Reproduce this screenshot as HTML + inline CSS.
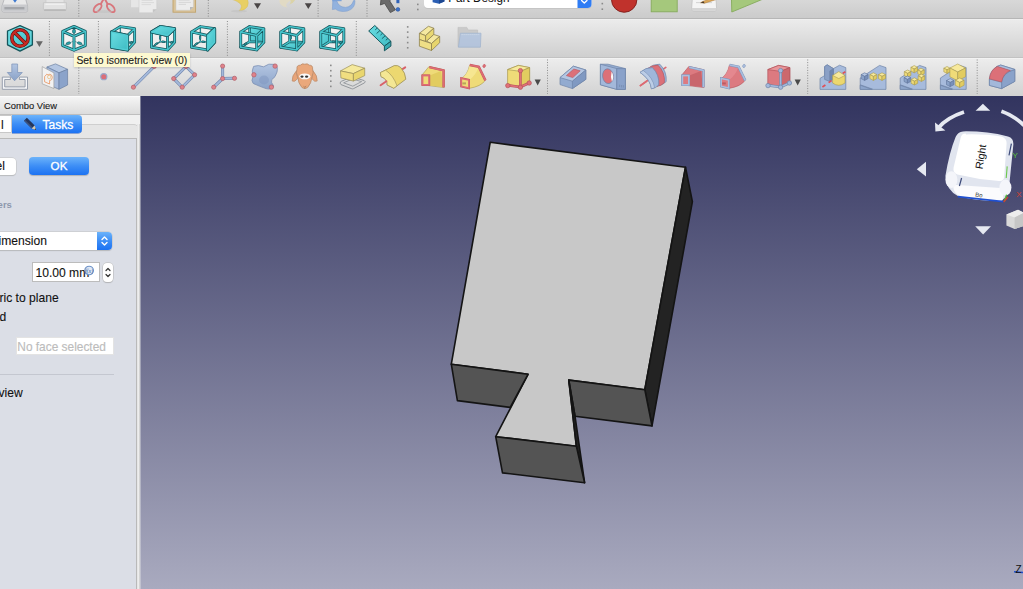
<!DOCTYPE html>
<html>
<head>
<meta charset="utf-8">
<title>FreeCAD</title>
<style>
html,body{margin:0;padding:0;}
body{width:1023px;height:589px;overflow:hidden;position:relative;background:#e4e4e4;font-family:"Liberation Sans",sans-serif;font-size:13px;color:#000;}
.abs{position:absolute;}
#row1{left:0;top:0;width:1023px;height:18px;background:linear-gradient(#d8d8d8,#cbcbcb);border-bottom:1px solid #b6b6b6;}
#row2{left:0;top:19px;width:1023px;height:38px;background:linear-gradient(#f2f2f2,#ebebeb 3%,#cfcfcf);border-bottom:1px solid #c2c2c2;}
#row3{left:0;top:58px;width:1023px;height:38px;background:linear-gradient(#f6f6f6,#ececec 4%,#d2d2d2);}
#view{left:141px;top:96px;width:882px;height:493px;background:linear-gradient(#32345f,#a9aabf);}
#panel{left:0;top:96px;width:140px;height:493px;background:#ececec;}
#split{left:137px;top:124px;width:3px;height:465px;background:linear-gradient(90deg,#dcdcdc,#f4f4f4 40%,#c8c8c8);}
.tx{font-size:12.1px;line-height:18px;white-space:nowrap;color:#111;-webkit-text-stroke:0.1px #111;}
.sep{width:0;border-left:1px dotted #8a8a8a;}
</style>
</head>
<body>
<div id="row1" class="abs"></div>
<div id="row2" class="abs"></div>
<div id="row3" class="abs"></div>
<div id="panel" class="abs"></div>
<div id="view" class="abs"></div>
<div class="abs" style="left:140px;top:96px;width:1px;height:493px;background:linear-gradient(#7e8098,#c2c3d0);"></div>
<svg id="icons" class="abs" style="left:0;top:0" width="1023" height="97" viewBox="0 0 1023 97">
<g clip-path="url(#r1clip)">
<defs><clipPath id="r1clip"><rect x="0" y="0" width="1023" height="18"/></clipPath></defs>
<path d="M4.6 -2 L25.4 -2 L27.6 6 L27.6 10.6 Q27.6 12 26 12 L3.6 12 Q2 12 2 10.6 L2 6 Z" fill="#e9e9e9" stroke="#aeb0b4" stroke-width="0.8"/>
<path d="M2.4 4.6 L27.2 4.6 L27.2 10.6 Q27.2 11.6 26 11.6 L3.6 11.6 Q2.4 11.6 2.4 10.6 Z" fill="#c9cacd"/>
<rect x="4.4" y="7" width="20" height="2.4" fill="#a4a6aa"/>
<path d="M12.4 -1 L17.6 -1 L15 2.8 Z" fill="#3c78d0"/>
<path d="M46 -2 L64 -2 L64 3 L46 3 Z" fill="#e4e4e4" stroke="#c6c6c6" stroke-width="0.6"/>
<path d="M43.4 2.6 L66.4 2.6 L66.4 9.4 Q66.4 10.6 65 10.6 L44.8 10.6 Q43.4 10.6 43.4 9.4 Z" fill="#e2e2e2" stroke="#c2c2c2" stroke-width="0.7"/>
<rect x="45.4" y="3.6" width="19" height="1.2" fill="#f2f2f2"/><rect x="43.8" y="9.2" width="22.2" height="1.6" rx="0.8" fill="#b4b4b4"/>
<line x1="78.8" y1="0" x2="78.8" y2="17" stroke="#8c8c8c" stroke-width="1" stroke-dasharray="1 1.6"/>
<ellipse cx="97.6" cy="8" rx="2.7" ry="5" fill="none" stroke="#d8767c" stroke-width="1.9" transform="rotate(42 97.6 8)"/>
<ellipse cx="110.8" cy="8" rx="2.7" ry="5" fill="none" stroke="#d8767c" stroke-width="1.9" transform="rotate(-42 110.8 8)"/>
<path d="M100.8 4 L103.6 -1 M107.6 4 L104.8 -1" stroke="#d8767c" stroke-width="1.9"/>
<ellipse cx="104.2" cy="11.6" rx="8" ry="1.4" fill="#bdbdbd" opacity="0.5"/>
<rect x="130.8" y="-2" width="9.4" height="9.6" fill="#e6e6e6" stroke="#cfcfcf" stroke-width="0.5"/>
<path d="M139 -2 L156.8 -2 L156.8 9.2 L152.8 12.8 L139 12.8 Z" fill="#ebebeb" stroke="#cdcdcd" stroke-width="0.6"/>
<path d="M156.8 9.2 L152.8 12.8 L152.8 9.2 Z" fill="#c4c4c4"/>
<path d="M141.6 0.4 L152.6 0.4 M141.6 2.6 L154 2.6 M141.6 4.6 L151 4.6" stroke="#d2d2d2" stroke-width="0.7"/>
<rect x="173" y="-3" width="22.6" height="15.2" fill="#d9c39a" stroke="#c0a36c" stroke-width="0.9"/>
<path d="M176 -3 L193.4 -3 L193.4 7 L190 10.2 L176 10.2 Z" fill="#ececec" stroke="#c8c8c8" stroke-width="0.5"/>
<path d="M193.4 7 L190 10.2 L190 7 Z" fill="#b8b8b8"/>
<path d="M178.6 0.2 L189.6 0.2 M178.6 2.4 L191 2.4 M178.6 4.4 L186 4.4" stroke="#cfcfcf" stroke-width="0.7"/>
<line x1="208.3" y1="0" x2="208.3" y2="17" stroke="#8c8c8c" stroke-width="1" stroke-dasharray="1 1.6"/>
<path d="M230.9 -1 Q236.4 0.4 240 3.4 Q243.2 6.6 239.2 10.7 Q244.6 10.6 247.4 6.4 Q249 3 247.4 -1 Z" fill="#e8cf64" stroke="#d6bc54" stroke-width="0.5"/>
<ellipse cx="239" cy="11.2" rx="8" ry="1.2" fill="#bdbdbd" opacity="0.5"/>
<polygon points="254,3.2 261,3.2 257.5,9.0" fill="#4a4646"/>
<path d="M296 -1 Q288.6 0.6 286.8 3.4 Q285.2 6 287.6 7.4 Q282 7.2 280 3.6 Q278.6 0.4 280.6 -2 Z" fill="#e3dbbf" opacity="0.8"/>
<path d="M290 -1 Q291.6 2 289.4 4.6 Q293.6 3.6 295.6 -1 Z" fill="#dcd29c" opacity="0.8"/>
<polygon points="304.8,3.2 311.8,3.2 308.3,9.0" fill="#4a4646"/>
<line x1="318.1" y1="0" x2="318.1" y2="17" stroke="#8c8c8c" stroke-width="1" stroke-dasharray="1 1.6"/>
<path d="M332.4 9.6 L332.8 0.6 L336.6 0.6 Q338.6 7.2 345.4 7.4 Q351.6 7 353.6 0.6 L355 0.6 Q355.4 8.6 347.4 11 Q339.6 12.6 335.4 9 Z" fill="#92b2de" stroke="#7f9fce" stroke-width="0.6"/>
<path d="M332.2 -1 L341.6 -1 L341.6 1.2 L332.2 1.2 Z" fill="#7ca2d8"/>
<line x1="367" y1="0" x2="367" y2="17" stroke="#8c8c8c" stroke-width="1" stroke-dasharray="1 1.6"/>
<path d="M381 -1 L380.4 5 L384.6 3.4 L390.4 12.6 L395.4 9.8 L389.6 0.8 L391.6 -1 Z" fill="#6b6b6b" stroke="#4a4a4a" stroke-width="0.8" stroke-linejoin="round"/>
<rect x="396.4" y="-1" width="3" height="4.2" fill="#2f62b8"/>
<circle cx="397.9" cy="9.4" r="1.9" fill="#3d72c8" stroke="#234a94" stroke-width="0.5"/>
<rect x="417" y="3.6000000000000005" width="1.6" height="1.6" fill="#8a8a8a"/>
<rect x="417" y="8.7" width="1.6" height="1.6" fill="#8a8a8a"/>
<path d="M424 -2 L591.5 -2 L591.5 4.2 Q591.5 8.2 587.5 8.2 L428 8.2 Q424 8.2 424 4.2 Z" fill="#bdbdbd" opacity="0.6" transform="translate(0,0.7)"/>
<path d="M424 -2 L591.5 -2 L591.5 4 Q591.5 8 587.5 8 L428 8 Q424 8 424 4 Z" fill="#ffffff"/>
<path d="M577.5 -2 L591.5 -2 L591.5 4 Q591.5 8 587.5 8 L577.5 8 Z" fill="#2f7cf4"/>
<path d="M581.6 0.6 L584.3 3 L587 0.6" fill="none" stroke="#fff" stroke-width="1.4" stroke-linecap="round" stroke-linejoin="round"/>
<path d="M432.6 -1 L444.4 -1 L444.4 1.4 L439 3.8 L432.6 2.2 Z" fill="#2b5fb4"/>
<path d="M439 -1 L444.4 -1 L444.4 1.4 L439 3.8 Z" fill="#1d4890"/>
<text x="448.3" y="2.0" font-family="Liberation Sans,sans-serif" font-size="12.4" textLength="61.2" lengthAdjust="spacingAndGlyphs" fill="#111">Part Design</text>
<rect x="601.5" y="2.8" width="1.6" height="1.6" fill="#8a8a8a"/>
<rect x="601.5" y="8.399999999999999" width="1.6" height="1.6" fill="#8a8a8a"/>
<circle cx="624.2" cy="-0.4" r="12.7" fill="#c0322c" stroke="#7e1c18" stroke-width="0.9"/>
<rect x="651.2" y="-3" width="26" height="14.8" fill="#a5c87c" stroke="#86aa5c" stroke-width="0.9"/>
<path d="M692.4 -2 L716 -2 L716.6 9 Q716.6 11 714.6 11 L693.6 11 Q691.6 11 691.6 9 Z" fill="#f4f4f4" stroke="#bdbdbd" stroke-width="0.7"/>
<path d="M691.8 8 L716.4 8 L716.4 9.4 Q716.4 10.8 714.6 10.8 L693.6 10.8 Q691.8 10.8 691.8 9.4 Z" fill="#d4d4d4"/>
<path d="M696 2.6 L712 2.6" stroke="#c9c9c9" stroke-width="0.8"/>
<path d="M700.6 2.8 L703.4 1.2 L714 -2.6 L716 -0.4 L704.6 3.2 Z" fill="#dca85a" stroke="#a87430" stroke-width="0.5"/>
<path d="M700.6 2.8 L703.4 1.2 L704.6 3.2 Z" fill="#4a3a2a"/>
<path d="M731.4 -3 L768 -3 L731.8 12 Z" fill="#a5c87c" stroke="#86aa5c" stroke-width="0.9" stroke-linejoin="round"/>
</g>
<defs>
<linearGradient id="gcy" x1="0" y1="0" x2="1" y2="1"><stop offset="0" stop-color="#6adde2"/><stop offset="1" stop-color="#3fbcc4"/></linearGradient>
<linearGradient id="gye" x1="0" y1="0" x2="0" y2="1"><stop offset="0" stop-color="#f6e48c"/><stop offset="1" stop-color="#e6cf62"/></linearGradient>
<linearGradient id="gbl" x1="0" y1="0" x2="0" y2="1"><stop offset="0" stop-color="#b4c6e2"/><stop offset="1" stop-color="#8aa2c8"/></linearGradient>
<linearGradient id="gbl2" x1="0" y1="0" x2="1" y2="0"><stop offset="0" stop-color="#9db3d6"/><stop offset="1" stop-color="#7d97c0"/></linearGradient>
<linearGradient id="grd" x1="0" y1="0" x2="0" y2="1"><stop offset="0" stop-color="#e58a8e"/><stop offset="1" stop-color="#d4686e"/></linearGradient>
<linearGradient id="ggr" x1="0" y1="0" x2="0" y2="1"><stop offset="0" stop-color="#f4f4f4"/><stop offset="1" stop-color="#d8d8d8"/></linearGradient>
</defs>
<g>
<polygon points="20,25.6 32.4,31 32.4,44.8 20,51.1 7.5,44.8 7.5,31" fill="url(#gcy)" stroke="#16565c" stroke-width="1.3" stroke-linejoin="round"/>
<polygon points="20,27.2 30.8,32 30.8,43.8 20,49.3 9.1,43.8 9.1,32" fill="none" stroke="#8feaee" stroke-width="0.7" opacity="0.7"/>
<circle cx="20" cy="38" r="8.2" fill="none" stroke="#5e100e" stroke-width="3.5"/>
<line x1="14.4" y1="32.2" x2="25.8" y2="43.8" stroke="#5e100e" stroke-width="3.5"/>
<circle cx="20" cy="38" r="8.2" fill="none" stroke="#c62a24" stroke-width="2.3"/>
<line x1="14.4" y1="32.2" x2="25.8" y2="43.8" stroke="#c62a24" stroke-width="2.3"/>
</g>
<polygon points="36,41.3 42.8,41.3 39.4,47.099999999999994" fill="#666"/>
<line x1="49.4" y1="21" x2="49.4" y2="56" stroke="#8c8c8c" stroke-width="1" stroke-dasharray="1 1.6"/>
<polygon points="74,26.4 85.3,31.4 85.3,45.6 74,50.2 62.7,45.6 62.7,31.4" fill="#f6f6f6" opacity="0.85"/>
<path d="M74 26 L74 41 M74 41 L62 46 M74 41 L86 46" stroke="#2c8a90" stroke-width="0.8" fill="none" opacity="0.7"/>
<ellipse cx="74" cy="31.3" rx="1.5" ry="2.3" fill="#2aa0a8" stroke="#16565c" stroke-width="0.6"/>
<ellipse cx="68.4" cy="43.3" rx="2.4" ry="1.3" fill="#2aa0a8" stroke="#16565c" stroke-width="0.5" transform="rotate(-18 68.4 43.3)"/>
<ellipse cx="79.6" cy="43.3" rx="2.4" ry="1.3" fill="#2aa0a8" stroke="#16565c" stroke-width="0.5" transform="rotate(18 79.6 43.3)"/>
<path d="M74.0 26.4 L62.7 31.4 M74.0 26.4 L85.3 31.4 M62.7 31.4 L74.0 36.4 M85.3 31.4 L74.0 36.4 M62.7 31.4 L62.7 45.6 M85.3 31.4 L85.3 45.6 M74.0 36.4 L74.0 50.2 M62.7 45.6 L74.0 50.2 M85.3 45.6 L74.0 50.2" fill="none" stroke="#16565c" stroke-width="2.9" stroke-linecap="round" stroke-linejoin="round"/>
<path d="M74.0 26.4 L62.7 31.4 M74.0 26.4 L85.3 31.4 M62.7 31.4 L74.0 36.4 M85.3 31.4 L74.0 36.4 M62.7 31.4 L62.7 45.6 M85.3 31.4 L85.3 45.6 M74.0 36.4 L74.0 50.2 M62.7 45.6 L74.0 50.2 M85.3 45.6 L74.0 50.2" fill="none" stroke="#45c3ca" stroke-width="1.5" stroke-linecap="round" stroke-linejoin="round"/>
<line x1="98.4" y1="21" x2="98.4" y2="56" stroke="#8c8c8c" stroke-width="1" stroke-dasharray="1 1.6"/>
<polygon points="111.5,31.9 120.4,26.6 134.6,28.7 134.6,42.3 127.5,49.9 111.5,47.2" fill="#f2f2f2" opacity="0.8"/>
<path d="M120.4 26.6 L120.4 41.6 M120.4 41.6 L111.5 47.2 M120.4 41.6 L134.6 42.3" fill="none" stroke="#16565c" stroke-width="1.3" stroke-linecap="round" stroke-linejoin="round"/>
<path d="M120.4 26.6 L120.4 41.6 M120.4 41.6 L111.5 47.2 M120.4 41.6 L134.6 42.3" fill="none" stroke="#45c3ca" stroke-width="0.5" stroke-linecap="round" stroke-linejoin="round"/>
<path d="M111.5 31.9 L127.5 35.5 M127.5 35.5 L127.5 49.9 M127.5 49.9 L111.5 47.2 M111.5 47.2 L111.5 31.9 M111.5 31.9 L120.4 26.6 M120.4 26.6 L134.6 28.7 M134.6 28.7 L127.5 35.5 M134.6 28.7 L134.6 42.3 M134.6 42.3 L127.5 49.9" fill="none" stroke="#16565c" stroke-width="2.9" stroke-linecap="round" stroke-linejoin="round"/>
<path d="M111.5 31.9 L127.5 35.5 M127.5 35.5 L127.5 49.9 M127.5 49.9 L111.5 47.2 M111.5 47.2 L111.5 31.9 M111.5 31.9 L120.4 26.6 M120.4 26.6 L134.6 28.7 M134.6 28.7 L127.5 35.5 M134.6 28.7 L134.6 42.3 M134.6 42.3 L127.5 49.9" fill="none" stroke="#45c3ca" stroke-width="1.5" stroke-linecap="round" stroke-linejoin="round"/>
<polygon points="111.5,31.9 127.5,35.5 127.5,49.9 111.5,47.2" fill="#16565c" stroke="#16565c" stroke-width="3.1" stroke-linejoin="round"/>
<polygon points="111.5,31.9 127.5,35.5 127.5,49.9 111.5,47.2" fill="url(#gcy)" stroke="#52cdd4" stroke-width="1.5" stroke-linejoin="round"/>
<path d="M130.4 43.2 L131.8 42.0" stroke="#16565c" stroke-width="2.1" stroke-linecap="round"/>
<path d="M130.4 43.2 L131.8 42.0" stroke="#2fa9b1" stroke-width="1" stroke-linecap="round"/>
<polygon points="151.5,31.9 160.4,26.6 174.6,28.7 174.6,42.3 167.5,49.9 151.5,47.2" fill="#f2f2f2" opacity="0.8"/>
<path d="M160.4 26.6 L160.4 41.6 M160.4 41.6 L151.5 47.2 M160.4 41.6 L174.6 42.3" fill="none" stroke="#16565c" stroke-width="1.3" stroke-linecap="round" stroke-linejoin="round"/>
<path d="M160.4 26.6 L160.4 41.6 M160.4 41.6 L151.5 47.2 M160.4 41.6 L174.6 42.3" fill="none" stroke="#45c3ca" stroke-width="0.5" stroke-linecap="round" stroke-linejoin="round"/>
<path d="M151.5 31.9 L167.5 35.5 M167.5 35.5 L167.5 49.9 M167.5 49.9 L151.5 47.2 M151.5 47.2 L151.5 31.9 M151.5 31.9 L160.4 26.6 M160.4 26.6 L174.6 28.7 M174.6 28.7 L167.5 35.5 M174.6 28.7 L174.6 42.3 M174.6 42.3 L167.5 49.9" fill="none" stroke="#16565c" stroke-width="2.9" stroke-linecap="round" stroke-linejoin="round"/>
<path d="M151.5 31.9 L167.5 35.5 M167.5 35.5 L167.5 49.9 M167.5 49.9 L151.5 47.2 M151.5 47.2 L151.5 31.9 M151.5 31.9 L160.4 26.6 M160.4 26.6 L174.6 28.7 M174.6 28.7 L167.5 35.5 M174.6 28.7 L174.6 42.3 M174.6 42.3 L167.5 49.9" fill="none" stroke="#45c3ca" stroke-width="1.5" stroke-linecap="round" stroke-linejoin="round"/>
<polygon points="151.5,31.9 160.4,26.6 174.6,28.7 167.5,35.5" fill="#16565c" stroke="#16565c" stroke-width="3.1" stroke-linejoin="round"/>
<polygon points="151.5,31.9 160.4,26.6 174.6,28.7 167.5,35.5" fill="url(#gcy)" stroke="#52cdd4" stroke-width="1.5" stroke-linejoin="round"/>
<path d="M160.1 36.6 L160.1 38.8" stroke="#16565c" stroke-width="2.1" stroke-linecap="round"/>
<path d="M160.1 36.6 L160.1 38.8" stroke="#2fa9b1" stroke-width="1" stroke-linecap="round"/>
<path d="M155.3 44.8 L157.0 43.4" stroke="#16565c" stroke-width="2.1" stroke-linecap="round"/>
<path d="M155.3 44.8 L157.0 43.4" stroke="#2fa9b1" stroke-width="1" stroke-linecap="round"/>
<path d="M162.6 41.6 L164.2 41.9" stroke="#16565c" stroke-width="2.1" stroke-linecap="round"/>
<path d="M162.6 41.6 L164.2 41.9" stroke="#2fa9b1" stroke-width="1" stroke-linecap="round"/>
<path d="M171.2 42.6 L172.4 41.8" stroke="#16565c" stroke-width="2.1" stroke-linecap="round"/>
<path d="M171.2 42.6 L172.4 41.8" stroke="#2fa9b1" stroke-width="1" stroke-linecap="round"/>
<polygon points="191.5,31.9 200.4,26.6 214.6,28.7 214.6,42.3 207.5,49.9 191.5,47.2" fill="#f2f2f2" opacity="0.8"/>
<path d="M200.4 26.6 L200.4 41.6 M200.4 41.6 L191.5 47.2 M200.4 41.6 L214.6 42.3" fill="none" stroke="#16565c" stroke-width="1.3" stroke-linecap="round" stroke-linejoin="round"/>
<path d="M200.4 26.6 L200.4 41.6 M200.4 41.6 L191.5 47.2 M200.4 41.6 L214.6 42.3" fill="none" stroke="#45c3ca" stroke-width="0.5" stroke-linecap="round" stroke-linejoin="round"/>
<path d="M191.5 31.9 L207.5 35.5 M207.5 35.5 L207.5 49.9 M207.5 49.9 L191.5 47.2 M191.5 47.2 L191.5 31.9 M191.5 31.9 L200.4 26.6 M200.4 26.6 L214.6 28.7 M214.6 28.7 L207.5 35.5 M214.6 28.7 L214.6 42.3 M214.6 42.3 L207.5 49.9" fill="none" stroke="#16565c" stroke-width="2.9" stroke-linecap="round" stroke-linejoin="round"/>
<path d="M191.5 31.9 L207.5 35.5 M207.5 35.5 L207.5 49.9 M207.5 49.9 L191.5 47.2 M191.5 47.2 L191.5 31.9 M191.5 31.9 L200.4 26.6 M200.4 26.6 L214.6 28.7 M214.6 28.7 L207.5 35.5 M214.6 28.7 L214.6 42.3 M214.6 42.3 L207.5 49.9" fill="none" stroke="#45c3ca" stroke-width="1.5" stroke-linecap="round" stroke-linejoin="round"/>
<polygon points="207.5,35.5 214.6,28.7 214.6,42.3 207.5,49.9" fill="#16565c" stroke="#16565c" stroke-width="3.1" stroke-linejoin="round"/>
<polygon points="207.5,35.5 214.6,28.7 214.6,42.3 207.5,49.9" fill="url(#gcy)" stroke="#52cdd4" stroke-width="1.5" stroke-linejoin="round"/>
<path d="M200.1 36.6 L200.1 38.8" stroke="#16565c" stroke-width="2.1" stroke-linecap="round"/>
<path d="M200.1 36.6 L200.1 38.8" stroke="#2fa9b1" stroke-width="1" stroke-linecap="round"/>
<path d="M195.3 44.8 L197.0 43.4" stroke="#16565c" stroke-width="2.1" stroke-linecap="round"/>
<path d="M195.3 44.8 L197.0 43.4" stroke="#2fa9b1" stroke-width="1" stroke-linecap="round"/>
<path d="M202.6 41.6 L204.2 41.9" stroke="#16565c" stroke-width="2.1" stroke-linecap="round"/>
<path d="M202.6 41.6 L204.2 41.9" stroke="#2fa9b1" stroke-width="1" stroke-linecap="round"/>
<line x1="227.4" y1="21" x2="227.4" y2="56" stroke="#8c8c8c" stroke-width="1" stroke-dasharray="1 1.6"/>
<polygon points="240.7,31.9 249.6,26.6 263.8,28.7 263.8,42.3 256.7,49.9 240.7,47.2" fill="#f2f2f2" opacity="0.8"/>
<polygon points="249.6,26.6 263.8,28.7 263.8,42.3 249.6,41.6" fill="url(#gcy)" opacity="1"/>
<path d="M249.6 26.6 L249.6 41.6 M249.6 41.6 L240.7 47.2 M249.6 41.6 L263.8 42.3" fill="none" stroke="#16565c" stroke-width="2.6" stroke-linecap="round" stroke-linejoin="round"/>
<path d="M249.6 26.6 L249.6 41.6 M249.6 41.6 L240.7 47.2 M249.6 41.6 L263.8 42.3" fill="none" stroke="#45c3ca" stroke-width="1.3" stroke-linecap="round" stroke-linejoin="round"/>
<path d="M240.7 31.9 L256.7 35.5 M256.7 35.5 L256.7 49.9 M256.7 49.9 L240.7 47.2 M240.7 47.2 L240.7 31.9 M240.7 31.9 L249.6 26.6 M249.6 26.6 L263.8 28.7 M263.8 28.7 L256.7 35.5 M263.8 28.7 L263.8 42.3 M263.8 42.3 L256.7 49.9" fill="none" stroke="#16565c" stroke-width="2.9" stroke-linecap="round" stroke-linejoin="round"/>
<path d="M240.7 31.9 L256.7 35.5 M256.7 35.5 L256.7 49.9 M256.7 49.9 L240.7 47.2 M240.7 47.2 L240.7 31.9 M240.7 31.9 L249.6 26.6 M249.6 26.6 L263.8 28.7 M263.8 28.7 L256.7 35.5 M263.8 28.7 L263.8 42.3 M263.8 42.3 L256.7 49.9" fill="none" stroke="#45c3ca" stroke-width="1.5" stroke-linecap="round" stroke-linejoin="round"/>
<path d="M244.8 44.6 L246.4 43.2" stroke="#16565c" stroke-width="2.1" stroke-linecap="round"/>
<path d="M244.8 44.6 L246.4 43.2" stroke="#2fa9b1" stroke-width="1" stroke-linecap="round"/>
<polygon points="280.7,31.9 289.6,26.6 303.8,28.7 303.8,42.3 296.7,49.9 280.7,47.2" fill="#f2f2f2" opacity="0.8"/>
<polygon points="280.7,47.2 296.7,49.9 303.8,42.3 289.6,41.6" fill="url(#gcy)" opacity="1"/>
<path d="M289.6 26.6 L289.6 41.6 M289.6 41.6 L280.7 47.2 M289.6 41.6 L303.8 42.3" fill="none" stroke="#16565c" stroke-width="2.6" stroke-linecap="round" stroke-linejoin="round"/>
<path d="M289.6 26.6 L289.6 41.6 M289.6 41.6 L280.7 47.2 M289.6 41.6 L303.8 42.3" fill="none" stroke="#45c3ca" stroke-width="1.3" stroke-linecap="round" stroke-linejoin="round"/>
<path d="M280.7 31.9 L296.7 35.5 M296.7 35.5 L296.7 49.9 M296.7 49.9 L280.7 47.2 M280.7 47.2 L280.7 31.9 M280.7 31.9 L289.6 26.6 M289.6 26.6 L303.8 28.7 M303.8 28.7 L296.7 35.5 M303.8 28.7 L303.8 42.3 M303.8 42.3 L296.7 49.9" fill="none" stroke="#16565c" stroke-width="2.9" stroke-linecap="round" stroke-linejoin="round"/>
<path d="M280.7 31.9 L296.7 35.5 M296.7 35.5 L296.7 49.9 M296.7 49.9 L280.7 47.2 M280.7 47.2 L280.7 31.9 M280.7 31.9 L289.6 26.6 M289.6 26.6 L303.8 28.7 M303.8 28.7 L296.7 35.5 M303.8 28.7 L303.8 42.3 M303.8 42.3 L296.7 49.9" fill="none" stroke="#45c3ca" stroke-width="1.5" stroke-linecap="round" stroke-linejoin="round"/>
<path d="M290.8 36.6 L290.8 38.6" stroke="#16565c" stroke-width="2.1" stroke-linecap="round"/>
<path d="M290.8 36.6 L290.8 38.6" stroke="#2fa9b1" stroke-width="1" stroke-linecap="round"/>
<polygon points="320.7,31.9 329.6,26.6 343.8,28.7 343.8,42.3 336.7,49.9 320.7,47.2" fill="#f2f2f2" opacity="0.8"/>
<polygon points="320.7,31.9 329.6,26.6 329.6,41.6 320.7,47.2" fill="url(#gcy)" opacity="1"/>
<path d="M329.6 26.6 L329.6 41.6 M329.6 41.6 L320.7 47.2 M329.6 41.6 L343.8 42.3" fill="none" stroke="#16565c" stroke-width="2.6" stroke-linecap="round" stroke-linejoin="round"/>
<path d="M329.6 26.6 L329.6 41.6 M329.6 41.6 L320.7 47.2 M329.6 41.6 L343.8 42.3" fill="none" stroke="#45c3ca" stroke-width="1.3" stroke-linecap="round" stroke-linejoin="round"/>
<path d="M320.7 31.9 L336.7 35.5 M336.7 35.5 L336.7 49.9 M336.7 49.9 L320.7 47.2 M320.7 47.2 L320.7 31.9 M320.7 31.9 L329.6 26.6 M329.6 26.6 L343.8 28.7 M343.8 28.7 L336.7 35.5 M343.8 28.7 L343.8 42.3 M343.8 42.3 L336.7 49.9" fill="none" stroke="#16565c" stroke-width="2.9" stroke-linecap="round" stroke-linejoin="round"/>
<path d="M320.7 31.9 L336.7 35.5 M336.7 35.5 L336.7 49.9 M336.7 49.9 L320.7 47.2 M320.7 47.2 L320.7 31.9 M320.7 31.9 L329.6 26.6 M329.6 26.6 L343.8 28.7 M343.8 28.7 L336.7 35.5 M343.8 28.7 L343.8 42.3 M343.8 42.3 L336.7 49.9" fill="none" stroke="#45c3ca" stroke-width="1.5" stroke-linecap="round" stroke-linejoin="round"/>
<path d="M332.8 41.6 L334.4 41.9" stroke="#16565c" stroke-width="2.1" stroke-linecap="round"/>
<path d="M332.8 41.6 L334.4 41.9" stroke="#2fa9b1" stroke-width="1" stroke-linecap="round"/>
<path d="M340.2 42.8 L341.6 41.8" stroke="#16565c" stroke-width="2.1" stroke-linecap="round"/>
<path d="M340.2 42.8 L341.6 41.8" stroke="#2fa9b1" stroke-width="1" stroke-linecap="round"/>
<line x1="356.3" y1="21" x2="356.3" y2="56" stroke="#8c8c8c" stroke-width="1" stroke-dasharray="1 1.6"/>
<polygon points="374.8,25.5 368.7,31 384.4,46.1 390.9,41.3" fill="url(#gcy)" stroke="#16565c" stroke-width="1" stroke-linejoin="round"/>
<polygon points="384.4,46.1 384.4,50.8 390.9,46.1 390.9,41.3" fill="#36aab2" stroke="#16565c" stroke-width="1" stroke-linejoin="round"/>
<path d="M377.3 28 L375.2 29.9 M379.9 30.6 L376.6 33.5 M382.6 33.2 L380.5 35.1 M385.2 35.8 L381.9 38.7 M387.9 38.4 L385.8 40.3" stroke="#16565c" stroke-width="0.9" fill="none"/>
<rect x="406.9" y="26.1" width="1.6" height="1.6" fill="#8a8a8a"/>
<rect x="406.9" y="31.3" width="1.6" height="1.6" fill="#8a8a8a"/>
<rect x="406.9" y="36.5" width="1.6" height="1.6" fill="#8a8a8a"/>
<rect x="406.9" y="41.8" width="1.6" height="1.6" fill="#8a8a8a"/>
<rect x="406.9" y="47.0" width="1.6" height="1.6" fill="#8a8a8a"/>
<g stroke="#8e8250" stroke-width="0.8" stroke-linejoin="round">
<polygon points="419.4,33.3 428.4,26.3 433.8,28.2 425.6,35.6" fill="#f5e9a0"/>
<polygon points="419.4,33.3 425.6,35.6 425.6,41.5 419.4,39.5" fill="#efdf86"/>
<polygon points="425.6,35.6 433.8,28.2 433.8,34.3 426.4,41.3 425.6,41.5" fill="#e9d872"/>
<polygon points="426.6,41.2 433.8,34.5 439.7,36.4 431.5,43.5" fill="#f5e9a0"/>
<polygon points="419.4,39.5 431.5,43.5 431.5,50.5 419.4,46.2" fill="#efdf86"/>
<polygon points="431.5,43.5 439.7,36.4 439.7,42.7 431.5,50.5" fill="#e7d56c"/>
</g>
<g opacity="0.75">
<path d="M458 27.4 L466.8 27.4 L468.2 30 L477.6 30 L477.6 46.6 L458 46.6 Z" fill="#c2c2c2" stroke="#b2b2b2" stroke-width="0.6"/>
<path d="M460.4 33.2 L481 33.2 L480.4 47.2 L458.4 47.2 Z" fill="#a9bedd" stroke="#8ea6c8" stroke-width="0.7"/>
<path d="M461.6 34.6 L479.8 34.6" stroke="#d6e2f2" stroke-width="0.8" stroke-dasharray="1 1"/>
</g>
<path d="M2.3 77.1 L2.3 89.3 L27.5 89.3 L27.5 77.1 L19.4 77.1 L19.4 79.5 L25.1 79.5 L25.1 86.9 L4.7 86.9 L4.7 79.5 L10.4 79.5 L10.4 77.1 Z" fill="#f5f6f8" stroke="#8f97a6" stroke-width="0.9" stroke-linejoin="round"/>
<path d="M11.8 64 L17.6 64 L17.6 72.5 L22.3 72.5 L14.6 80.8 L7.3 72.5 L11.8 72.5 Z" fill="url(#gbl)" stroke="#7d93b8" stroke-width="0.7" stroke-linejoin="round"/>
<g stroke="#6a7fa2" stroke-width="0.7" stroke-linejoin="round">
<polygon points="46.9,67 55.5,63.9 67.6,69.3 59,72.9" fill="#b4c6e2"/>
<polygon points="46.9,67 59,72.9 59,89.3 46.9,84" fill="#a6b9da"/>
<polygon points="59,72.9 67.6,69.3 67.6,85 59,89.3" fill="#8ba3ca"/>
</g>
<polygon points="42.2,66.6 53.9,72.9 53.9,88.5 42.2,83.8" fill="#f2f2f2" stroke="#a2a2a2" stroke-width="0.7" stroke-linejoin="round"/>
<path d="M44.6 76.6 L46.8 74.2 L48 75 Q49.8 73.4 51.6 75.2 Q53 77.4 51.6 79.6 Q50.6 80.6 49.6 80.4 L49.6 84 L44.6 81.8 Z" fill="none" stroke="#e8925c" stroke-width="0.8"/>
<circle cx="49.2" cy="77" r="1.7" fill="none" stroke="#e8b060" stroke-width="0.6"/>
<line x1="78.8" y1="67.5" x2="78.8" y2="94" stroke="#8c8c8c" stroke-width="1" stroke-dasharray="1 1.6"/>
<circle cx="103.8" cy="76.7" r="3.1" fill="#db6e78" stroke="#97a9cc" stroke-width="1.1"/>
<line x1="133.6" y1="87" x2="154.2" y2="66.5" stroke="#6a7fa6" stroke-width="3.0" stroke-linecap="round"/>
<line x1="133.6" y1="87" x2="154.2" y2="66.5" stroke="#a3b8da" stroke-width="2.0" stroke-linecap="round"/>
<circle cx="133.4" cy="87.2" r="2.1" fill="#e0828a" stroke="#b0606a" stroke-width="0.7"/>
<circle cx="154.2" cy="66.5" r="2.1" fill="#e0828a" stroke="#b0606a" stroke-width="0.7"/>
<line x1="173.7" y1="78.6" x2="182.2" y2="87.2" stroke="#6a7fa6" stroke-width="3.0" stroke-linecap="round"/>
<line x1="173.7" y1="78.6" x2="182.2" y2="87.2" stroke="#a3b8da" stroke-width="2.0" stroke-linecap="round"/>
<line x1="182.2" y1="87.2" x2="194.6" y2="74.8" stroke="#6a7fa6" stroke-width="3.0" stroke-linecap="round"/>
<line x1="182.2" y1="87.2" x2="194.6" y2="74.8" stroke="#a3b8da" stroke-width="2.0" stroke-linecap="round"/>
<line x1="194.6" y1="74.8" x2="186" y2="66.5" stroke="#6a7fa6" stroke-width="3.0" stroke-linecap="round"/>
<line x1="194.6" y1="74.8" x2="186" y2="66.5" stroke="#a3b8da" stroke-width="2.0" stroke-linecap="round"/>
<line x1="186" y1="66.5" x2="173.7" y2="78.6" stroke="#6a7fa6" stroke-width="3.0" stroke-linecap="round"/>
<line x1="186" y1="66.5" x2="173.7" y2="78.6" stroke="#a3b8da" stroke-width="2.0" stroke-linecap="round"/>
<circle cx="173.7" cy="78.6" r="2.1" fill="#e0828a" stroke="#b0606a" stroke-width="0.7"/>
<circle cx="182.2" cy="87.2" r="2.1" fill="#e0828a" stroke="#b0606a" stroke-width="0.7"/>
<circle cx="194.6" cy="74.8" r="2.1" fill="#e0828a" stroke="#b0606a" stroke-width="0.7"/>
<circle cx="186" cy="66.5" r="2.1" fill="#e0828a" stroke="#b0606a" stroke-width="0.7"/>
<line x1="222.6" y1="78.6" x2="222.6" y2="66.1" stroke="#6a7fa6" stroke-width="3.0" stroke-linecap="round"/>
<line x1="222.6" y1="78.6" x2="222.6" y2="66.1" stroke="#a3b8da" stroke-width="2.0" stroke-linecap="round"/>
<line x1="222.6" y1="78.6" x2="234.5" y2="78.3" stroke="#6a7fa6" stroke-width="3.0" stroke-linecap="round"/>
<line x1="222.6" y1="78.6" x2="234.5" y2="78.3" stroke="#a3b8da" stroke-width="2.0" stroke-linecap="round"/>
<line x1="222.6" y1="78.6" x2="213.7" y2="87.2" stroke="#6a7fa6" stroke-width="3.0" stroke-linecap="round"/>
<line x1="222.6" y1="78.6" x2="213.7" y2="87.2" stroke="#a3b8da" stroke-width="2.0" stroke-linecap="round"/>
<circle cx="222.6" cy="78.6" r="2.1" fill="#e0828a" stroke="#b0606a" stroke-width="0.7"/>
<circle cx="222.6" cy="66.1" r="2.1" fill="#e0828a" stroke="#b0606a" stroke-width="0.7"/>
<circle cx="234.5" cy="78.3" r="2.1" fill="#e0828a" stroke="#b0606a" stroke-width="0.7"/>
<circle cx="213.7" cy="87.2" r="2.1" fill="#e0828a" stroke="#b0606a" stroke-width="0.7"/>
<path d="M253.6 66.4 Q258 64.6 263.6 66.8 Q268.6 62.8 274.6 64.4 Q278.4 66 277 72 Q275.6 77.4 271.8 79.6 Q270.4 82 273.6 86 Q272 90.2 266 88.6 Q259.4 86.4 253.2 83.4 Q250.8 80.8 253 76.6 Q251.2 70.6 253.6 66.4 Z" fill="url(#gbl)" stroke="#7d90b4" stroke-width="0.8"/>
<ellipse cx="264" cy="80" rx="5" ry="4.4" fill="#7f96c0" opacity="0.5"/>
<circle cx="275.1" cy="66.1" r="2.2" fill="#e0828a" stroke="#b0606a" stroke-width="0.7"/>
<circle cx="253.9" cy="74.8" r="2.2" fill="#e0828a" stroke="#b0606a" stroke-width="0.7"/>
<circle cx="271.4" cy="87.1" r="2.2" fill="#e0828a" stroke="#b0606a" stroke-width="0.7"/>
<g>
<path d="M296.6 70.6 Q291.6 76 292.2 81 Q294.6 82.6 297.6 78.6 Z" fill="#e8a478" stroke="#b98a6a" stroke-width="0.7"/>
<path d="M312.8 70.6 Q317.8 76 317.2 81 Q314.8 82.6 311.8 78.6 Z" fill="#e8a478" stroke="#b98a6a" stroke-width="0.7"/>
<path d="M297 69 Q296.4 65 300.4 65.2 Q302 63.2 304.8 64.2 Q307.6 63.2 309.2 65.2 Q313 65 312.6 69 Q314 72.8 312 76.4 Q311.4 83.6 307.6 87.6 Q304.8 89.6 302 87.6 Q298.2 83.6 297.6 76.4 Q295.6 72.8 297 69 Z" fill="#eaa87c" stroke="#b98a6a" stroke-width="0.8"/>
<ellipse cx="304.8" cy="76.4" rx="5.6" ry="2.9" fill="#fafafa"/>
<ellipse cx="302" cy="76.6" rx="1.5" ry="1.2" fill="#333"/><ellipse cx="306.6" cy="76.6" rx="1.6" ry="1.2" fill="#333"/>
<path d="M303.4 85.8 L304.8 87.4 L306.2 85.8 M304.8 87.4 L304.8 88.6" stroke="#a87858" stroke-width="0.7" fill="none"/>
</g>
<rect x="330.0" y="64.6" width="1.6" height="1.6" fill="#8a8a8a"/>
<rect x="330.0" y="69.9" width="1.6" height="1.6" fill="#8a8a8a"/>
<rect x="330.0" y="75.1" width="1.6" height="1.6" fill="#8a8a8a"/>
<rect x="330.0" y="80.4" width="1.6" height="1.6" fill="#8a8a8a"/>
<rect x="330.0" y="85.6" width="1.6" height="1.6" fill="#8a8a8a"/>
<path d="M340.2 83 Q340.2 81.6 341.6 81.2 L352 76.8 L364.2 80.6 Q366 81.6 364.6 82.8 L353.6 88.6 Q352.6 89.2 351.4 88.6 L341 84.6 Q340.2 84 340.2 83 Z" fill="none" stroke="#8a8f94" stroke-width="0.9" stroke-linejoin="round"/>
<path d="M343.6 82.8 L352.4 79 L361.6 81.6 L352.8 86.2 Z" fill="none" stroke="#8a8f94" stroke-width="0.8" stroke-linejoin="round"/>
<g stroke="#9a8e58" stroke-width="0.7" stroke-linejoin="round">
<polygon points="340.5,70.9 352.2,64.6 364.7,68.2 353.4,73.6" fill="#f5e99c"/>
<polygon points="340.5,70.9 353.4,73.6 353.4,81.1 340.9,77.9" fill="#f0de80"/>
<polygon points="353.4,73.6 364.7,68.2 364.7,75.6 353.4,81.1" fill="#e9d66e"/>
</g>
<line x1="401.4" y1="69.8" x2="405.2" y2="67.4" stroke="#d8626a" stroke-width="2" stroke-linecap="round"/>
<path d="M380.4 72.6 L394.2 65.6 Q398 64.8 400.8 67.6 Q405.6 73 405.8 79.2 L393.8 88.2 L387.2 85 Q387.8 79.4 381 76.6 Z" fill="#ecd870" stroke="#9a8e58" stroke-width="0.8" stroke-linejoin="round"/>
<path d="M380.4 72.6 L385.6 70.2 Q393.4 75.4 397 85.8 L393.8 88.2 L387.2 85 Q387.8 79.4 381 76.6 Z" fill="#f4e794" stroke="#9a8e58" stroke-width="0.6" stroke-linejoin="round"/>
<line x1="380.6" y1="85.2" x2="386.4" y2="81.2" stroke="#d8626a" stroke-width="2" stroke-linecap="round"/>
<polygon points="429,66.5 444.2,69.8 444.2,87.6 428.6,85.6 422,85 422,75" fill="#efdb78" stroke="#a89a50" stroke-width="0.6" stroke-linejoin="round"/>
<polygon points="429.6,75.4 441,71 443.4,87 429.6,85.4" fill="#e2cc60"/>
<path d="M429.4 67.2 L443.6 70.4 L443.6 87.2" fill="none" stroke="#c25860" stroke-width="2.4" stroke-linejoin="miter"/>
<path d="M429.4 67.2 L443.6 70.4 L443.6 87.2" fill="none" stroke="#de6c74" stroke-width="1.6" stroke-linejoin="miter"/>
<rect x="422.6" y="75.6" width="6.4" height="9.2" fill="none" stroke="#c25860" stroke-width="2.4"/>
<rect x="422.6" y="75.6" width="6.4" height="9.2" fill="#efdb78" stroke="#de6c74" stroke-width="1.6"/>
<path d="M469.6 65.2 Q467.6 74.6 461.6 78.4 L461.6 86.4 L469 88.4 Q481.2 86.4 485.2 80.4 L478.6 67 Z" fill="#efdb78" stroke="#a89a50" stroke-width="0.6" stroke-linejoin="round"/>
<path d="M469.6 65.2 Q467.6 74.6 461.6 78.4 L469.4 80 Q476 75 478.6 67 Z" fill="#f6e794" opacity="0.9"/>
<path d="M469.8 65 L478.8 66.8 L485.4 80.4" fill="none" stroke="#c25860" stroke-width="2.5"/>
<path d="M469.8 65 L478.8 66.8 L485.4 80.4" fill="none" stroke="#de6c74" stroke-width="1.6"/>
<path d="M461.4 78.4 L468.8 80 L468.8 88 L461.4 86.2 Z" fill="none" stroke="#c25860" stroke-width="2.4"/>
<path d="M461.4 78.4 L468.8 80 L468.8 88 L461.4 86.2 Z" fill="#efdb78" stroke="#de6c74" stroke-width="1.5"/>
<rect x="462.4" y="82.4" width="3.6" height="2" fill="#a89a50" opacity="0.8"/>
<ellipse cx="484.2" cy="66" rx="1.3" ry="1.7" fill="#de6c74" stroke="#c25860" stroke-width="0.5" transform="rotate(25 484.2 66)"/>
<g stroke="#a89a50" stroke-width="0.7" stroke-linejoin="round">
<polygon points="507.6,69.6 518.4,65.4 529.6,67.6 529.6,82.6 520.4,86.8 507.6,84.6" fill="#efdb78"/>
<polygon points="507.6,69.6 518.4,65.4 529.6,67.6 520.4,71.4" fill="#f7e99c"/>
<polygon points="520.4,71.4 529.6,67.6 529.6,82.6 520.4,86.8" fill="#e2cc60"/>
</g>
<line x1="520.4" y1="87" x2="520.4" y2="70.6" stroke="#b4545c" stroke-width="2.6" stroke-linecap="round"/>
<line x1="520.4" y1="87" x2="520.4" y2="70.6" stroke="#e07078" stroke-width="1.6" stroke-linecap="round"/>
<line x1="520.4" y1="87" x2="507.8" y2="85.4" stroke="#b4545c" stroke-width="2.6" stroke-linecap="round"/>
<line x1="520.4" y1="87" x2="507.8" y2="85.4" stroke="#e07078" stroke-width="1.6" stroke-linecap="round"/>
<line x1="520.4" y1="87" x2="529.2" y2="83" stroke="#b4545c" stroke-width="2.6" stroke-linecap="round"/>
<line x1="520.4" y1="87" x2="529.2" y2="83" stroke="#e07078" stroke-width="1.6" stroke-linecap="round"/>
<circle cx="520.4" cy="70.6" r="2.2" fill="#e07078" stroke="#b4545c" stroke-width="0.7"/>
<circle cx="520.4" cy="87.2" r="2.2" fill="#e07078" stroke="#b4545c" stroke-width="0.7"/>
<circle cx="507.8" cy="85.6" r="2.2" fill="#e07078" stroke="#b4545c" stroke-width="0.7"/>
<circle cx="529.2" cy="83" r="2.2" fill="#e07078" stroke="#b4545c" stroke-width="0.7"/>
<polygon points="534.6,79.6 540.8000000000001,79.6 537.7,85.6" fill="#4a4a4a"/>
<line x1="547.5" y1="59.5" x2="547.5" y2="94" stroke="#8c8c8c" stroke-width="1" stroke-dasharray="1 1.6"/>
<g stroke="#6f84a8" stroke-width="0.7" stroke-linejoin="round">
<polygon points="560,77.6 573.4,66.2 585.8,70 585.8,79.4 572.4,88.6 560,84.6" fill="#93abd0"/>
<polygon points="560,77.6 573.4,66.2 585.8,70 572.4,81.2" fill="#b4c6e2"/>
<polygon points="572.4,81.2 585.8,70 585.8,79.4 572.4,88.6" fill="#8099c2"/>
</g>
<polygon points="566.4,75.6 573.8,69 580.2,70.8 572.8,77.6" fill="#dc7078" stroke="#b4545c" stroke-width="0.6"/>
<g stroke="#6f84a8" stroke-width="0.7" stroke-linejoin="round">
<polygon points="600.4,64.2 608,64.2 625.4,68.6 625.4,89.4 616.8,89.4 600.4,84.8" fill="#93abd0"/>
<polygon points="600.4,64.2 616.8,68.6 616.8,89.4 600.4,84.8" fill="#a3b8da"/>
<polygon points="616.8,68.6 625.4,68.6 625.4,89.4 616.8,89.4" fill="#8aa2ca"/>
</g>
<ellipse cx="608" cy="76.2" rx="5.4" ry="7.4" fill="#dc7078" stroke="#6f84a8" stroke-width="0.7" transform="rotate(-8 608 76.2)"/>
<path d="M611.6 71.6 Q614.6 76.6 612 81.8 Q610.2 76.6 611.6 71.6 Z" fill="#f8f8f8"/>
<path d="M619.6 84.6 L619.6 87 M621.6 85 L621.6 87.4 M623.4 85.2 L623.4 87.6" stroke="#6f84a8" stroke-width="0.6"/>
<line x1="640.4" y1="85.6" x2="665.8" y2="67.4" stroke="#dc6a72" stroke-width="1.7" stroke-linecap="round"/>
<path d="M647.4 69.0 Q653.0 63.8 659.8 64.2 Q667.0 71.2 666.2 81.6 Q663.0 85.0 658.8 85.4 Q657.8 75.6 647.4 69.0 Z" fill="#9fb6da" stroke="#6f84a8" stroke-width="0.7"/>
<path d="M645.6 70.0 Q651.2 64.8 658.0 65.2 Q665.2 72.2 664.4 82.6 Q661.2 86.0 657.0 86.4 Q656.0 76.6 645.6 70.0 Z" fill="#dc7078" stroke="#b4545c" stroke-width="0.7"/>
<path d="M640.0 72.4 Q645.6 67.2 652.4 67.6 Q659.6 74.6 658.8 85.0 Q655.6 88.4 651.4 88.8 Q650.4 79.0 640.0 72.4 Z" fill="#9fb6da" stroke="#6f84a8" stroke-width="0.7"/>
<path d="M640.0 72.4 Q641.6 71.0 643.4 70.6 Q653.0 77.4 654.6 87.6 Q653.0 88.6 651.4 88.8 Q650.4 79.0 640.0 72.4 Z" fill="#bccde6" stroke="#6f84a8" stroke-width="0.5"/>
<line x1="640.4" y1="85.6" x2="646.6" y2="81.2" stroke="#dc6a72" stroke-width="1.7" stroke-linecap="round"/>
<polygon points="688.8,66.5 704.0,69.8 704.0,87.6 688.4000000000001,85.6 681.8,85 681.8,75" fill="#dc7a80" stroke="#b4545c" stroke-width="0.6" stroke-linejoin="round"/>
<polygon points="689.4000000000001,75.4 700.8,71 703.2,87 689.4000000000001,85.4" fill="#c9666c"/>
<path d="M689.2 67.2 L703.4000000000001 70.4 L703.4000000000001 87.2" fill="none" stroke="#7c92b8" stroke-width="2.4" stroke-linejoin="miter"/>
<path d="M689.2 67.2 L703.4000000000001 70.4 L703.4000000000001 87.2" fill="none" stroke="#a9bede" stroke-width="1.6" stroke-linejoin="miter"/>
<rect x="682.4000000000001" y="75.6" width="6.4" height="9.2" fill="none" stroke="#7c92b8" stroke-width="2.4"/>
<rect x="682.4000000000001" y="75.6" width="6.4" height="9.2" fill="#dc7a80" stroke="#a9bede" stroke-width="1.6"/>
<path d="M729.4000000000001 65.2 Q727.4000000000001 74.6 721.4000000000001 78.4 L721.4000000000001 86.4 L728.8 88.4 Q741.0 86.4 745.0 80.4 L738.4000000000001 67 Z" fill="#dc7a80" stroke="#b4545c" stroke-width="0.6" stroke-linejoin="round"/>
<path d="M729.4000000000001 65.2 Q727.4000000000001 74.6 721.4000000000001 78.4 L729.2 80 Q735.8 75 738.4000000000001 67 Z" fill="#e48a90" opacity="0.9"/>
<path d="M729.6 65 L738.6 66.8 L745.2 80.4" fill="none" stroke="#7c92b8" stroke-width="2.5"/>
<path d="M729.6 65 L738.6 66.8 L745.2 80.4" fill="none" stroke="#a9bede" stroke-width="1.6"/>
<path d="M721.2 78.4 L728.6 80 L728.6 88 L721.2 86.2 Z" fill="none" stroke="#7c92b8" stroke-width="2.4"/>
<path d="M721.2 78.4 L728.6 80 L728.6 88 L721.2 86.2 Z" fill="#dc7a80" stroke="#a9bede" stroke-width="1.5"/>
<rect x="722.2" y="82.4" width="3.6" height="2" fill="#b4545c" opacity="0.8"/>
<ellipse cx="744.0" cy="66" rx="1.3" ry="1.7" fill="#a9bede" stroke="#7c92b8" stroke-width="0.5" transform="rotate(25 744.0 66)"/>
<g stroke="#b4545c" stroke-width="0.7" stroke-linejoin="round">
<polygon points="767.8,69.6 778.5999999999999,65.4 789.8,67.6 789.8,82.6 780.5999999999999,86.8 767.8,84.6" fill="#dc7a80"/>
<polygon points="767.8,69.6 778.5999999999999,65.4 789.8,67.6 780.5999999999999,71.4" fill="#e8969a"/>
<polygon points="780.5999999999999,71.4 789.8,67.6 789.8,82.6 780.5999999999999,86.8" fill="#cc686e"/>
</g>
<line x1="780.5999999999999" y1="87" x2="780.5999999999999" y2="70.6" stroke="#6f84a8" stroke-width="2.6" stroke-linecap="round"/>
<line x1="780.5999999999999" y1="87" x2="780.5999999999999" y2="70.6" stroke="#a3b8dc" stroke-width="1.6" stroke-linecap="round"/>
<line x1="780.5999999999999" y1="87" x2="768.0" y2="85.4" stroke="#6f84a8" stroke-width="2.6" stroke-linecap="round"/>
<line x1="780.5999999999999" y1="87" x2="768.0" y2="85.4" stroke="#a3b8dc" stroke-width="1.6" stroke-linecap="round"/>
<line x1="780.5999999999999" y1="87" x2="789.4000000000001" y2="83" stroke="#6f84a8" stroke-width="2.6" stroke-linecap="round"/>
<line x1="780.5999999999999" y1="87" x2="789.4000000000001" y2="83" stroke="#a3b8dc" stroke-width="1.6" stroke-linecap="round"/>
<circle cx="780.5999999999999" cy="70.6" r="2.2" fill="#a3b8dc" stroke="#6f84a8" stroke-width="0.7"/>
<circle cx="780.5999999999999" cy="87.2" r="2.2" fill="#a3b8dc" stroke="#6f84a8" stroke-width="0.7"/>
<circle cx="768.0" cy="85.6" r="2.2" fill="#a3b8dc" stroke="#6f84a8" stroke-width="0.7"/>
<circle cx="789.4000000000001" cy="83" r="2.2" fill="#a3b8dc" stroke="#6f84a8" stroke-width="0.7"/>
<polygon points="794.6,79.6 800.8000000000001,79.6 797.7,85.6" fill="#4a4a4a"/>
<line x1="807.7" y1="59.5" x2="807.7" y2="94" stroke="#8c8c8c" stroke-width="1" stroke-dasharray="1 1.6"/>
<g stroke="#6f84a8" stroke-width="0.7" stroke-linejoin="round">
<polygon points="820,78.4 824.6,75.6 824.6,66.6 827.2,64.8 833.4,68.6 839.6,65.2 845.8,67.6 845.8,89.4 820,89.4" fill="#a7bbdc"/>
<polygon points="824.6,66.6 827.2,64.8 833.4,68.6 833.4,78.6 829.6,81.4 824.6,79.4" fill="#8aa0c6"/>
<polygon points="829.8,71 833.4,68.6 833.4,78.6 829.8,81.4" fill="#6f86b0"/>
</g>
<path d="M822.4 87 L825.4 85 M828.6 82.6 L831.6 80.6 M842.6 73.4 L845.4 71.8" stroke="#e05058" stroke-width="1.7"/>
<g stroke="#a89a50" stroke-width="0.6">
<path d="M832.6 75.4 L832.6 83 Q838.8 87.6 845 83 L845 75.4 Z" fill="#ecd76e"/>
<polygon points="832.6,75.4 838.8,71.6 845,75.4 838.8,78.6" fill="#f7e99c"/>
</g>
<g stroke="#6f84a8" stroke-width="0.7" stroke-linejoin="round">
<polygon points="860.2,78 879.6,65.4 886.0,67.6 886.0,89.4 860.2,89.4" fill="#a7bbdc"/>
<polygon points="860.2,85.2 871.8000000000001,89.4 860.2,89.4" fill="#8ea6cc"/>
<path d="M860.2 84.8 L872.8000000000001 89.2" fill="none"/>
</g>
<g stroke="#5f7498" stroke-width="0.6" stroke-linejoin="round">
<polygon points="861.1,74.6 864.6,72.8 868.1,74.6 864.6,76.4" fill="#b4c6e2"/>
<polygon points="861.1,74.6 864.6,76.4 864.6,80.4 861.1,78.6" fill="#8aa2c8"/>
<polygon points="868.1,74.6 864.6,76.4 864.6,80.4 868.1,78.6" fill="#7890ba"/>
</g>
<g stroke="#a89a50" stroke-width="0.6" stroke-linejoin="round">
<polygon points="869.9,74.6 873.4,72.8 876.9,74.6 873.4,76.4" fill="#f7e99c"/>
<polygon points="869.9,74.6 873.4,76.4 873.4,80.4 869.9,78.6" fill="#efdb78"/>
<polygon points="876.9,74.6 873.4,76.4 873.4,80.4 876.9,78.6" fill="#e2cc60"/>
</g>
<g stroke="#a89a50" stroke-width="0.6" stroke-linejoin="round">
<polygon points="878.5,74.6 882.0,72.8 885.5,74.6 882.0,76.4" fill="#f7e99c"/>
<polygon points="878.5,74.6 882.0,76.4 882.0,80.4 878.5,78.6" fill="#efdb78"/>
<polygon points="885.5,74.6 882.0,76.4 882.0,80.4 885.5,78.6" fill="#e2cc60"/>
</g>
<g stroke="#6f84a8" stroke-width="0.7" stroke-linejoin="round">
<polygon points="900.2,78 919.6,65.4 926.0,67.6 926.0,89.4 900.2,89.4" fill="#a7bbdc"/>
<polygon points="900.2,85.2 911.8000000000001,89.4 900.2,89.4" fill="#8ea6cc"/>
<path d="M900.2 84.8 L912.8000000000001 89.2" fill="none"/>
</g>
<g stroke="#a89a50" stroke-width="0.6" stroke-linejoin="round">
<polygon points="910.9,67.3 914.2,65.6 917.5,67.3 914.2,69.0" fill="#f7e99c"/>
<polygon points="910.9,67.3 914.2,69.0 914.2,72.8 910.9,71.1" fill="#efdb78"/>
<polygon points="917.5,67.3 914.2,69.0 914.2,72.8 917.5,71.1" fill="#e2cc60"/>
</g>
<g stroke="#a89a50" stroke-width="0.6" stroke-linejoin="round">
<polygon points="917.7,69.9 921.0,68.2 924.3,69.9 921.0,71.6" fill="#f7e99c"/>
<polygon points="917.7,69.9 921.0,71.6 921.0,75.4 917.7,73.7" fill="#efdb78"/>
<polygon points="924.3,69.9 921.0,71.6 921.0,75.4 924.3,73.7" fill="#e2cc60"/>
</g>
<g stroke="#a89a50" stroke-width="0.6" stroke-linejoin="round">
<polygon points="904.3,71.7 907.6,70.0 910.9,71.7 907.6,73.4" fill="#f7e99c"/>
<polygon points="904.3,71.7 907.6,73.4 907.6,77.2 904.3,75.5" fill="#efdb78"/>
<polygon points="910.9,71.7 907.6,73.4 907.6,77.2 910.9,75.5" fill="#e2cc60"/>
</g>
<g stroke="#a89a50" stroke-width="0.6" stroke-linejoin="round">
<polygon points="918.1,75.9 921.4,74.2 924.7,75.9 921.4,77.6" fill="#f7e99c"/>
<polygon points="918.1,75.9 921.4,77.6 921.4,81.4 918.1,79.7" fill="#efdb78"/>
<polygon points="924.7,75.9 921.4,77.6 921.4,81.4 924.7,79.7" fill="#e2cc60"/>
</g>
<g stroke="#5f7498" stroke-width="0.6" stroke-linejoin="round">
<polygon points="904.1,77.7 907.4,76.0 910.7,77.7 907.4,79.4" fill="#b4c6e2"/>
<polygon points="904.1,77.7 907.4,79.4 907.4,83.2 904.1,81.5" fill="#8aa2c8"/>
<polygon points="910.7,77.7 907.4,79.4 907.4,83.2 910.7,81.5" fill="#7890ba"/>
</g>
<g stroke="#a89a50" stroke-width="0.6" stroke-linejoin="round">
<polygon points="911.1,79.5 914.4,77.8 917.7,79.5 914.4,81.2" fill="#f7e99c"/>
<polygon points="911.1,79.5 914.4,81.2 914.4,85.0 911.1,83.3" fill="#efdb78"/>
<polygon points="917.7,79.5 914.4,81.2 914.4,85.0 917.7,83.3" fill="#e2cc60"/>
</g>
<g stroke="#6f84a8" stroke-width="0.7" stroke-linejoin="round">
<polygon points="940.4,78 959.8,65.4 966.1999999999999,67.6 966.1999999999999,89.4 940.4,89.4" fill="#a7bbdc"/>
<polygon points="940.4,85.2 952.0,89.4 940.4,89.4" fill="#8ea6cc"/>
<path d="M940.4 84.8 L953.0 89.2" fill="none"/>
</g>
<g stroke="#a89a50" stroke-width="0.6" stroke-linejoin="round">
<polygon points="943.8,68.2 947.0,66.5 950.2,68.2 947.0,69.8" fill="#f7e99c"/>
<polygon points="943.8,68.2 947.0,69.8 947.0,73.4 943.8,71.8" fill="#efdb78"/>
<polygon points="950.2,68.2 947.0,69.8 947.0,73.4 950.2,71.8" fill="#e2cc60"/>
</g>
<g stroke="#a89a50" stroke-width="0.6" stroke-linejoin="round">
<polygon points="949.9,68.0 957.7,64.0 965.5,68.0 957.7,72.0" fill="#f7e99c"/>
<polygon points="949.9,68.0 957.7,72.0 957.7,80.8 949.9,76.8" fill="#efdb78"/>
<polygon points="965.5,68.0 957.7,72.0 957.7,80.8 965.5,76.8" fill="#e2cc60"/>
</g>
<g stroke="#5f7498" stroke-width="0.6" stroke-linejoin="round">
<polygon points="946.5,80.5 950.2,78.6 953.9,80.5 950.2,82.4" fill="#b4c6e2"/>
<polygon points="946.5,80.5 950.2,82.4 950.2,86.6 946.5,84.7" fill="#8aa2c8"/>
<polygon points="953.9,80.5 950.2,82.4 950.2,86.6 953.9,84.7" fill="#7890ba"/>
</g>
<g stroke="#a89a50" stroke-width="0.6" stroke-linejoin="round">
<polygon points="955.3,80.2 959.7,77.9 964.1,80.2 959.7,82.5" fill="#f7e99c"/>
<polygon points="955.3,80.2 959.7,82.5 959.7,87.5 955.3,85.3" fill="#efdb78"/>
<polygon points="964.1,80.2 959.7,82.5 959.7,87.5 964.1,85.3" fill="#e2cc60"/>
</g>
<line x1="977.2" y1="59.5" x2="977.2" y2="94" stroke="#8c8c8c" stroke-width="1" stroke-dasharray="1 1.6"/>
<g stroke="#6f84a8" stroke-width="0.7" stroke-linejoin="round">
<path d="M989.4 78.8 Q990.6 68 1000.6 65 L1014.8 69.4 L1014.8 81.4 L1001.6 88.6 L989.4 85.4 Z" fill="#93abd0"/>
<path d="M1001.6 82 Q1002.6 73 1014.8 69.4 L1014.8 81.4 L1001.6 88.6 Z" fill="#8aa2ca"/>
<path d="M996.4 66.6 L1000.6 65 L1014.8 69.4 L1010.4 71 Z" fill="#a9bede"/>
<path d="M989.4 79 L1001.6 82.2 L1001.6 88.6 L989.4 85.4 Z" fill="#a3b8da"/>
</g>
<path d="M989.4 78.8 Q990.4 69.6 997.4 66.4 L1010.4 70.6 Q1003 73.4 1001.6 82 Z" fill="#dc7078" stroke="#b4545c" stroke-width="0.6"/>

</svg>
<svg id="scene" class="abs" style="left:141px;top:96px" width="882" height="493" viewBox="141 96 882 493">

<g stroke="#141414" stroke-width="1.6" stroke-linejoin="round">
<!-- top face -->
<polygon fill="#c8c8c8" points="490.2,142.3 685.5,167.2 644.8,389.7 568.8,380.1 576.4,446.3 495.7,436.7 528,374.3 451.3,364.2"/>
<!-- right dark side -->
<polygon fill="#232323" points="685.5,167.2 692.4,201.7 652,425.9 644.8,389.7"/>
<!-- front-left face -->
<polygon fill="#545454" points="451.3,364.2 528,374.3 510.2,407.4 457.4,400.6"/>
<!-- front-right face -->
<polygon fill="#545454" points="568.8,380.1 644.8,389.7 652,425.9 575,416.2"/>
<!-- tab right side (dark thin) -->
<polygon fill="#232323" points="568.8,380.1 576.4,446.3 584.6,482.7 575,416.2"/>
<!-- tab front -->
<polygon fill="#545454" points="495.7,436.7 576.4,446.3 584.6,482.7 502.5,472.9"/>
</g>
<g id="navcube">
<!-- arrows -->
<polygon points="975.6,110.8 990.2,110.8 982.9,103.8" fill="#e6e9f1"/>
<polygon points="926,161.8 926,176.6 916.8,169.2" fill="#e6e9f1"/>
<polygon points="975.2,226.2 991,226.2 983.1,234.6" fill="#e6e9f1"/>
<path d="M964 112 Q947 117.6 938.6 127.6" fill="none" stroke="#e6e9f1" stroke-width="3.8"/>
<polygon points="935,122.6 945.4,130.4 935.4,131.6" fill="#e6e9f1"/>
<path d="M1001.4 111.2 Q1014 115.6 1024 125.4" fill="none" stroke="#e6e9f1" stroke-width="3.8"/>
<!-- cube body -->
<path d="M963 131.4 Q986 131 1008 136.4 Q1013.6 138 1013.4 144 L1009.6 182 Q1009 196 1001.6 200.6 Q980 201.6 958.6 196.6 Q946 190 945.4 176 Q949.4 152 955.6 137 Q958 131.6 963 131.4 Z" fill="#e1e5ef"/>
<!-- bottom face -->
<path d="M953.4 184.8 L1000 188 Q1005 195 1002.4 200.6 Q980 201.4 958.4 195.6 Q952.6 191.6 953.4 184.8 Z" fill="#fbfbfd"/>
<!-- rounded corner blobs -->
<ellipse cx="951.4" cy="179.6" rx="6" ry="8.4" fill="#f4f5fa"/>
<ellipse cx="1005.4" cy="187.6" rx="6" ry="8" fill="#f4f5fa"/>
<!-- main face -->
<path d="M966 134.4 Q986 134 1001 136.4 Q1006.8 137.8 1006.6 143.4 L1004.2 176.6 Q1004 181.4 999 181 Q978 179.4 957.4 174.4 Q952.6 172.6 953.6 167.6 L960.6 138 Q961.6 133.6 965.6 133.6 Z" fill="#ffffff"/>
<!-- side small dark marks -->
<path d="M1011.4 143.6 L1009 155.4" stroke="#3c4a7a" stroke-width="1.2"/>
<path d="M961.6 178 L959.4 186" stroke="#3c4a7a" stroke-width="1.2"/>
<!-- axis lines -->
<path d="M957.8 196.6 L1003.4 201.6" stroke="#1f4fd0" stroke-width="1.8"/>
<path d="M1007.2 166.4 L1006.2 178" stroke="#6cc84c" stroke-width="1.1"/>
<path d="M1004.4 201.4 L1006.6 194.6" stroke="#58c038" stroke-width="1.4"/>
<path d="M1003.6 202 L1008 197" stroke="#d04030" stroke-width="1.2"/>
<text x="1012.4" y="158.4" font-family="Liberation Sans,sans-serif" font-size="8" fill="#58c038">Y</text>
<text x="1016.2" y="196.8" font-family="Liberation Sans,sans-serif" font-size="8" fill="#d04030">X</text>
<text transform="translate(982.4,169.6) rotate(-81)" font-family="Liberation Sans,sans-serif" font-size="10.6" fill="#111">Right</text>
<text transform="translate(975,196.4) rotate(8)" font-family="Liberation Sans,sans-serif" font-size="6" fill="#333">Bo</text>
<!-- mini cube -->
<polygon points="1006.4,214.6 1018,209.8 1024,212.6 1024,226 1014.6,229 1006.4,225.4" fill="#d9d9d9"/>
<polygon points="1006.4,214.6 1018,209.8 1024,212.6 1014.6,217.6" fill="#ededed"/>
<polygon points="1014.6,217.6 1024,212.6 1024,226 1014.6,229" fill="#c6c6c6"/>
</g>
<g id="axis">
<path d="M1014 571.8 L1024 572.6" stroke="#1f4fd0" stroke-width="1.6"/>
<text x="1015.6" y="572.6" font-family="Liberation Sans,sans-serif" font-size="10" fill="#111">Z</text>
</g>

</svg>

<div id="cv" class="abs" style="left:0;top:96px;width:140px;height:19px;background:linear-gradient(#f5f5f5,#dcdcdc);border-top:1px solid #fbfbfb;border-bottom:1px solid #bebebe;box-sizing:border-box;"></div>
<div class="abs" id="cvt" style="left:4px;top:99px;font-size:9.4px;line-height:13px;color:#1a1a1a;white-space:nowrap;-webkit-text-stroke:0.12px #1a1a1a;">Combo View</div>
<div class="abs" style="left:0;top:115px;width:140px;height:10px;background:#f0f0f0;"></div>
<div class="abs" id="pane" style="left:-6px;top:124px;width:145px;height:480px;background:#e5e5e5;border:1px solid #cfcfcf;border-radius:5px;box-sizing:border-box;"></div>
<div class="abs" id="scroll" style="left:-2px;top:138px;width:139px;height:460px;background:#dbdee6;border:1px solid #b9b9b9;box-sizing:border-box;"></div>
<div class="abs" id="tab0" style="left:-10px;top:115px;width:22px;height:18px;background:#fff;border:1px solid #c8c8c8;border-radius:4px 0 0 4px;box-sizing:border-box;"></div>
<div class="abs tx" style="left:1px;top:117px;line-height:16px">l</div>
<div class="abs" id="tab1" style="left:12px;top:115px;width:70px;height:18px;background:linear-gradient(#6cb3fa,#3d8ef6 50%,#1c72f2);border-radius:0 4px 4px 0;box-shadow:0 0.5px 0 #2a63c8;"></div>
<div class="abs" id="tab1t" style="left:42.5px;top:116.5px;font-size:12px;line-height:17px;color:#fff;-webkit-text-stroke:0.3px #fff;">Tasks</div>
<svg class="abs" style="left:23px;top:117px" width="16" height="16" viewBox="0 0 16 16"><g transform="rotate(-45 8 8)"><rect x="6" y="0" width="4.2" height="11" fill="#26365a"/><rect x="6" y="0" width="1.4" height="11" fill="#3f5580"/><polygon points="6,11 10.2,11 8.1,15" fill="#d9c8a8"/><polygon points="7.3,13.6 8.9,13.6 8.1,15" fill="#222"/></g></svg>

<div class="abs" id="bcancel" style="left:-20px;top:158px;width:36px;height:17px;background:#fff;border-radius:4px;box-shadow:0 0 0 0.5px #c2c2c2,0 1px 1px rgba(0,0,0,.18);"></div>
<div class="abs tx" style="left:-4.6px;top:158px;line-height:17px">el</div>
<div class="abs" id="bok" style="left:29px;top:157px;width:60px;height:18px;background:linear-gradient(#6cb3fa,#3d8ef6 50%,#1c72f2);border-radius:4px;box-shadow:0 1px 1px rgba(0,0,0,.2);color:#fff;font-size:13px;line-height:18.5px;text-align:center;font-size:11.6px;-webkit-text-stroke:0.3px #fff;">OK</div>

<div class="abs" style="left:-2.4px;top:198px;font-size:9.5px;line-height:13px;color:#8d97ad;font-weight:bold;">ers</div>

<div class="abs" id="combo" style="left:-10px;top:232px;width:122px;height:18px;background:#fff;border-radius:4px;box-shadow:0 0 0 0.5px #c2c2c2,0 1px 1px rgba(0,0,0,.2);"></div>
<div class="abs" style="left:97px;top:232px;width:15px;height:18px;background:linear-gradient(#6cb3fa,#3d8ef6 50%,#1c72f2);border-radius:0 4px 4px 0;"></div>
<svg class="abs" style="left:97px;top:232px" width="15" height="18" viewBox="0 0 15 18"><path d="M5 7.5 L7.5 5 L10 7.5 M5 10.5 L7.5 13 L10 10.5" fill="none" stroke="#fff" stroke-width="1.4" stroke-linecap="round" stroke-linejoin="round"/></svg>
<div class="abs tx" style="left:-1.5px;top:232px;">imension</div>

<div class="abs" id="spin" style="left:32px;top:262px;width:68px;height:20px;background:#fff;border:1px solid #bcbcbc;box-sizing:border-box;"></div>
<div class="abs tx" id="spint" style="left:35.5px;top:263.5px;">10.00 mm</div>
<svg class="abs" style="left:83px;top:265px" width="12" height="12" viewBox="0 0 12 12"><circle cx="6.1" cy="5.5" r="4.3" fill="#dfe8f6" stroke="#6d92c8" stroke-width="1.1"/><text x="6.1" y="7.8" font-size="6" text-anchor="middle" fill="#3b5f98" font-family="Liberation Serif,serif" font-style="italic">f(x)</text></svg>
<div class="abs" id="step" style="left:103px;top:263px;width:10px;height:19px;background:#fff;border-radius:4px;box-shadow:0 0 0 0.5px #b8b8b8,0 1px 1px rgba(0,0,0,.2);"></div>
<svg class="abs" style="left:103px;top:263px" width="10" height="19" viewBox="0 0 10 19"><path d="M3 7.5 L5 5.5 L7 7.5 M3 11.5 L5 13.5 L7 11.5" fill="none" stroke="#333" stroke-width="1.2" stroke-linecap="round" stroke-linejoin="round"/></svg>

<div class="abs tx" style="left:-0.5px;top:289px;">ric to plane</div>
<div class="abs tx" style="left:-0.5px;top:307.5px;">d</div>

<div class="abs" id="noface" style="left:16px;top:337px;width:98px;height:18px;background:#fff;border:1px solid #e3e3e3;box-sizing:border-box;"></div>
<div class="abs tx" id="nofacet" style="left:17.3px;top:337.5px;font-size:11.9px;color:#bcbcbc;-webkit-text-stroke:0.15px #bcbcbc;">No face selected</div>

<div class="abs" style="left:0;top:374px;width:114px;height:1px;background:#c4c7d0;"></div>
<div class="abs tx" style="left:-1.5px;top:383.5px;">view</div>
<div id="split" class="abs"></div>

<div class="abs" id="tip" style="left:74px;top:53px;width:116px;height:14px;background:#fdf9d0;box-shadow:0 1px 2px rgba(0,0,0,.18);"></div>
<div class="abs" id="tipt" style="left:76.4px;top:54px;font-size:10.4px;line-height:13px;color:#1c1c1c;white-space:nowrap;-webkit-text-stroke:0.1px #1c1c1c;">Set to isometric view (0)</div>

</body>
</html>
